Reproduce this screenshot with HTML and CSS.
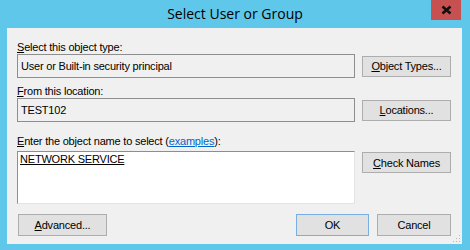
FILE: index.html
```html
<!DOCTYPE html>
<html>
<head>
<meta charset="utf-8">
<title>Select User or Group</title>
<link rel="stylesheet" href="styles.css">
</head>
<body>
<div class="frame">
  <div class="titlebar">
    <span class="spacer"></span>
    <span class="title">Select User or Group</span>
    <span class="close" aria-label="Close">
      <svg width="11" height="10" viewBox="0 0 11 10"><path d="M1.5 1.5 L9.5 8.5 M9.5 1.5 L1.5 8.5" stroke="#111" stroke-width="2.6" fill="none"/></svg>
    </span>
  </div>
  <div class="client">
    <div class="section">
      <div class="lbl"><u>S</u>elect this object type:</div>
      <div class="field ro">User or Built-in security principal</div>
      <div class="btn side"><u>O</u>bject Types...</div>
    </div>
    <div class="section s2">
      <div class="lbl"><u>F</u>rom this location:</div>
      <div class="field ro">TEST102</div>
      <div class="btn side"><u>L</u>ocations...</div>
    </div>
    <div class="section s3">
      <div class="lbl"><u>E</u>nter the object name to select (<span class="link">examples</span>):</div>
      <div class="area"><span class="resolved">NETWORK SERVICE</span></div>
      <div class="btn side top"><u>C</u>heck Names</div>
    </div>
    <div class="footer">
      <div class="btn adv"><u>A</u>dvanced...</div>
      <div class="fill"></div>
      <div class="btn ok">OK</div>
      <div class="btn cancel">Cancel</div>
    </div>
    <svg class="grip" width="8" height="8" viewBox="0 0 8 8">
      <rect x="6" y="0" width="1" height="1" fill="#b8b8b8"/>
      <rect x="3" y="3" width="1" height="1" fill="#b8b8b8"/>
      <rect x="6" y="3" width="1" height="1" fill="#b8b8b8"/>
      <rect x="0" y="6" width="1" height="1" fill="#b8b8b8"/>
      <rect x="3" y="6" width="1" height="1" fill="#b8b8b8"/>
      <rect x="6" y="6" width="1" height="1" fill="#b8b8b8"/>
    </svg>
  </div>
</div>
</body>
</html>
```
FILE: styles.css
```css
html, body {
  margin: 0;
  padding: 0;
}
body {
  width: 470px;
  height: 250px;
  overflow: hidden;
  background: #5fc7ea;
  font-family: "Liberation Sans", Arial, sans-serif;
  font-size: 11px;
  letter-spacing: -0.2px;
  color: #000;
}
.frame {
  display: flex;
  flex-direction: column;
  height: 250px;
}
.titlebar {
  height: 28px;
  display: grid;
  grid-template-columns: 1fr auto 1fr;
  align-items: start;
  padding: 0 9px;
}
.title {
  font-family: "Open Sans", "Noto Sans", sans-serif;
  font-size: 14px;
  letter-spacing: 0;
  line-height: 28px;
  color: #000;
}
.close {
  justify-self: end;
  width: 30px;
  height: 20px;
  background: #c75050;
  display: flex;
  align-items: center;
  justify-content: center;
}
.client {
  flex: 1;
  margin: 0 8px 6px 7px;
  background: #f0f0f0;
  position: relative;
  padding: 13px 11px 0 10px;
  display: flex;
  flex-direction: column;
}
.section {
  display: grid;
  grid-template-columns: 338px 1fr;
  column-gap: 7px;
}
.s2 { margin-top: 7px; }
.s3 { margin-top: 13px; }
.lbl {
  grid-column: 1 / -1;
  line-height: 13px;
  height: 13px;
}
.s3 .lbl { margin-bottom: 3px; }
.field {
  box-sizing: border-box;
  height: 24px;
  border: 1px solid #8e8e8e;
  padding-left: 3px;
  display: flex;
  align-items: center;
}
.ro { background: #f0f0f0; }
.area {
  box-sizing: border-box;
  height: 53px;
  background: #fff;
  border: 1px solid;
  border-color: #8e8e8e #e3e3e3 #e3e3e3 #8e8e8e;
  padding: 1px 2px;
  line-height: 13px;
}
.resolved { text-decoration: underline; }
.link { color: #0066cc; text-decoration: underline; }
.btn {
  box-sizing: border-box;
  height: 21px;
  border: 1px solid #adadad;
  background: #e1e1e1;
  display: flex;
  align-items: center;
  justify-content: center;
  white-space: nowrap;
}
.side { align-self: center; }
.side.top { align-self: start; margin-top: 1px; }
.footer {
  display: flex;
  margin-top: 10px;
  column-gap: 8px;
}
.footer .btn { height: 22px; }
.fill { flex: 1; }
.adv { width: 89px; margin-left: 1px; }
.ok { width: 73px; border-color: #78aee0; }
.cancel { width: 74px; }
.grip {
  position: absolute;
  right: 1px;
  bottom: 1px;
}
```
